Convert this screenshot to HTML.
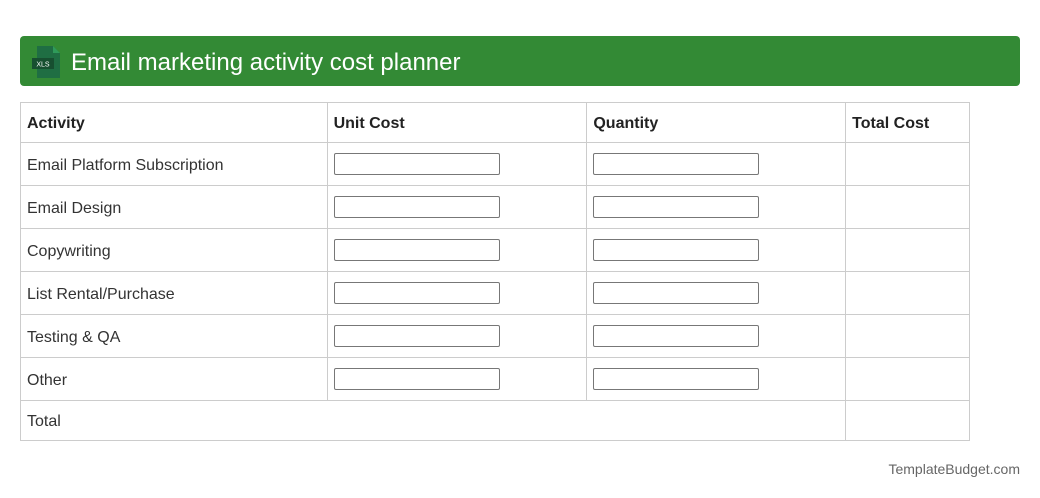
<!DOCTYPE html>
<html><head><style>
*{margin:0;padding:0;box-sizing:border-box}
body{width:1040px;height:498px;background:#fff;font-family:"Liberation Sans",Arial,sans-serif;color:#333;position:relative;overflow:hidden}
.bar{position:absolute;left:20px;top:36px;width:1000px;height:50px;background:#338a35;border-radius:4px}
.bar h1{position:absolute;left:51px;top:12px;font-size:24px;font-weight:normal;color:#fff;line-height:30px}
.icon{position:absolute;left:12px;top:10px}
table{position:absolute;left:20px;top:102px;border-collapse:collapse;width:950px}
td,th{border:1px solid #ccc;font-size:16px;text-align:left;padding:0 6px;vertical-align:middle}
th{height:40px;font-weight:bold;color:#222;padding-top:2px}
td{height:43px;padding-top:3px}
tr.t td{height:40px}
.in{display:block;width:166px;height:22px;border:1px solid #777;border-radius:2px;background:#fff;margin-top:-3px}
.f{position:absolute;right:20px;top:461px;font-size:14px;color:#666}
</style></head><body>
<div class="bar">
<svg class="icon" width="30" height="32" viewBox="0 0 30 32"><path d="M5 0H21L28 7V32H5Z" fill="#1f6e43"/><path d="M21 0V7H28Z" fill="#2f9a5a"/><rect x="0" y="12" width="22" height="11" fill="#174f30"/><text x="11" y="20.5" font-size="7" fill="#fff" text-anchor="middle" font-family="Liberation Sans">XLS</text></svg>
<h1>Email marketing activity cost planner</h1>
</div>
<table>
<colgroup><col style="width:307px"><col style="width:260px"><col style="width:259px"><col style="width:124px"></colgroup>
<tr><th>Activity</th><th>Unit Cost</th><th>Quantity</th><th>Total Cost</th></tr>
<tr><td>Email Platform Subscription</td><td><span class="in"></span></td><td><span class="in"></span></td><td></td></tr>
<tr><td>Email Design</td><td><span class="in"></span></td><td><span class="in"></span></td><td></td></tr>
<tr><td>Copywriting</td><td><span class="in"></span></td><td><span class="in"></span></td><td></td></tr>
<tr><td>List Rental/Purchase</td><td><span class="in"></span></td><td><span class="in"></span></td><td></td></tr>
<tr><td>Testing &amp; QA</td><td><span class="in"></span></td><td><span class="in"></span></td><td></td></tr>
<tr><td>Other</td><td><span class="in"></span></td><td><span class="in"></span></td><td></td></tr>
<tr class="t"><td colspan="3">Total</td><td></td></tr>
</table>
<div class="f">TemplateBudget.com</div>
</body></html>
